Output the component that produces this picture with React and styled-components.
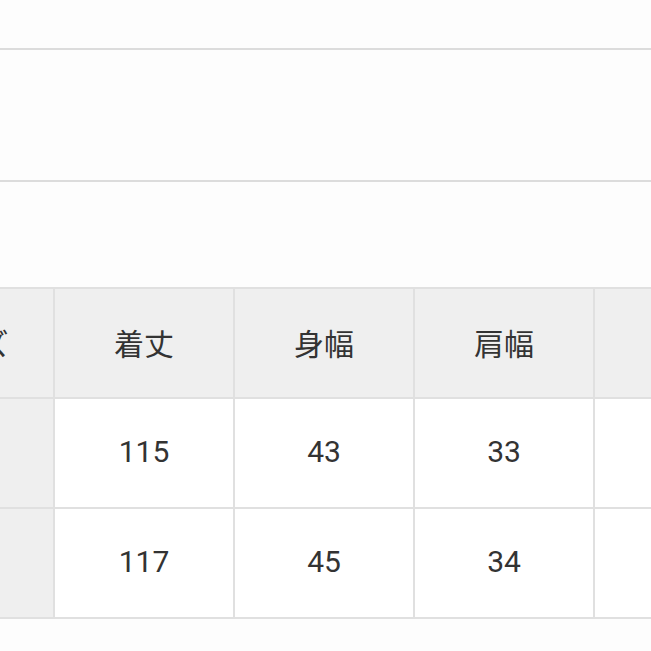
import React from 'react';
import styled, { createGlobalStyle } from 'styled-components';

const GlobalStyle = createGlobalStyle`
    html, body {
        margin: 0;
        padding: 0;
        background-color: #fdfdfd;
        font-family: Roboto, 'Noto Sans CJK JP', sans-serif;
        overflow: hidden;
    }
`;

const Page = styled.main`
    width: 651px;
    height: 651px;
    overflow: hidden;
    padding-top: 48px;
    box-sizing: border-box;
`;

const Lead = styled.div`
    height: 130px;
    border-top: 2px solid #dcdcdc;
    border-bottom: 2px solid #dcdcdc;
`;

const Spacer = styled.div`
    height: 105px;
`;

const Table = styled.div`
    display: grid;
    grid-template-columns: repeat(6, 180px);
    margin-left: -127px;
    width: max-content;
    border-top: 2px solid #e0e0e0;
    border-left: 2px solid #e0e0e0;
`;

const Cell = styled.div`
    box-sizing: border-box;
    height: 110px;
    padding-bottom: 3px;
    display: flex;
    align-items: center;
    justify-content: center;
    border-right: 2px solid #e0e0e0;
    border-bottom: 2px solid #e0e0e0;
    background: ${(p) => (p.$head ? '#efefef' : '#fff')};
    color: #333;
    font-size: 30px;
`;

const header = ['サイズ', '着丈', '身幅', '肩幅', '袖丈', ''];
const rows = [
    ['S', '115', '43', '33', '58', ''],
    ['M', '117', '45', '34', '59', ''],
];

export default function App() {
    return (
        <>
            <GlobalStyle />
            <Page>
                <Lead />
                <Spacer />
                <Table>
                    {header.map((h, i) => (
                        <Cell key={i} $head>{h}</Cell>
                    ))}
                    {rows.map((r, ri) =>
                        r.map((v, ci) => (
                            <Cell key={ri + '-' + ci} $head={ci === 0}>
                                {ci === 0 ? '' : v}
                            </Cell>
                        ))
                    )}
                </Table>
            </Page>
        </>
    );
}
